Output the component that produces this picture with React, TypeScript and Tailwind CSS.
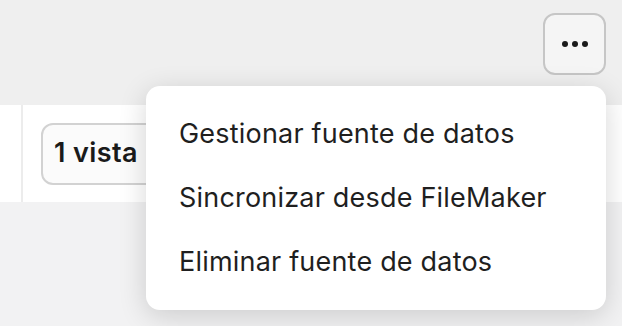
import { useState } from "react";

const menuItems = [
  "Gestionar fuente de datos",
  "Sincronizar desde FileMaker",
  "Eliminar fuente de datos",
];

export default function App() {
  const [open] = useState(true);

  return (
    <div
      className="relative w-[622px] h-[326px] overflow-hidden bg-[#f2f2f3] flex flex-col"
      style={{ fontFamily: "Inter, 'Noto Sans', sans-serif" }}
    >
      {/* barra superior */}
      <div className="h-[105px] bg-[#efefef] flex justify-end items-start pt-[13px] pr-[16px]">
        <button className="w-[63px] h-[62px] rounded-[12px] border-2 border-[#c6c6c6] bg-[#f5f5f5] flex items-center justify-center gap-[4px]">
          <span className="w-[6px] h-[6px] rounded-full bg-[#1a1a1a]" />
          <span className="w-[6px] h-[6px] rounded-full bg-[#1a1a1a]" />
          <span className="w-[6px] h-[6px] rounded-full bg-[#1a1a1a]" />
        </button>
      </div>

      {/* fila de vistas */}
      <div className="h-[97px] bg-white flex">
        <div className="w-[23px] border-r-2 border-[#ececec]" />
        <div className="flex items-center pl-[18px]">
          <div className="h-[62px] w-[140px] rounded-[12px] border-2 border-[#d2d2d2] bg-[#fbfbfb] flex items-center pl-[11px] text-[27px] tracking-[0.4px] font-semibold text-[#1a1a1a]">
            1 vista
          </div>
        </div>
      </div>

      {/* menú */}
      {open && (
        <div className="absolute top-[86px] right-[16px] w-[460px] rounded-[14px] bg-white py-[16px] shadow-[0_6px_28px_rgba(0,0,0,0.16)]">
          {menuItems.map((item) => (
            <div
              key={item}
              className="h-[64px] flex items-center pl-[33px] text-[27px] tracking-[0.2px] text-[#1f1f1f]"
            >
              {item}
            </div>
          ))}
        </div>
      )}
    </div>
  );
}
